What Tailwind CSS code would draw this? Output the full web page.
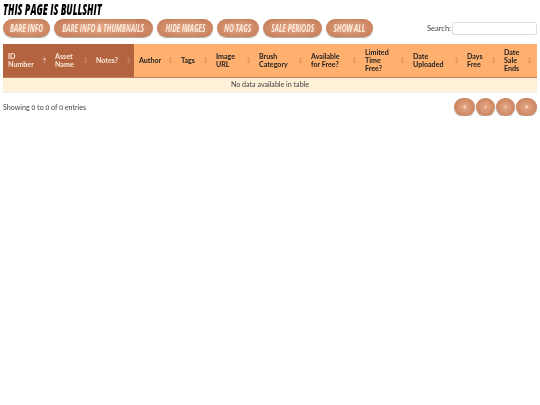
<!doctype html>
<html><head><meta charset="utf-8"><script src="https://cdn.jsdelivr.net/npm/@tailwindcss/browser@4"></script></head>
<body class="bg-white font-['Lato',sans-serif] text-[7.1px] text-[#444] antialiased">
<div class="px-[3px] w-[540px] will-change-transform">
<h1 class="font-['Open_Sans',sans-serif] italic font-extrabold text-[15px] leading-[18px] text-black whitespace-nowrap"><span class="inline-block origin-left scale-x-[.6]">THIS PAGE IS BULLSHIT</span></h1>
<div class="flex items-start justify-between h-[25px] mt-px">
<div class="flex gap-[4px] font-['Open_Sans',sans-serif] italic font-bold text-[11px] text-[#fbeee0] whitespace-nowrap">
<a class="h-[18px] w-[47px] flex items-center justify-center rounded-full bg-[radial-gradient(ellipse_at_center,#e8a988,#bf7650)] shadow-[0_1px_1px_#aaa]"><span class="inline-block scale-x-[.6]">BARE INFO</span></a>
<a class="h-[18px] w-[99px] flex items-center justify-center rounded-full bg-[radial-gradient(ellipse_at_center,#e8a988,#bf7650)] shadow-[0_1px_1px_#aaa]"><span class="inline-block scale-x-[.6]">BARE INFO &amp; THUMBNAILS</span></a>
<a class="h-[18px] w-[56px] flex items-center justify-center rounded-full bg-[radial-gradient(ellipse_at_center,#e8a988,#bf7650)] shadow-[0_1px_1px_#aaa]"><span class="inline-block scale-x-[.6]">HIDE IMAGES</span></a>
<a class="h-[18px] w-[42px] flex items-center justify-center rounded-full bg-[radial-gradient(ellipse_at_center,#e8a988,#bf7650)] shadow-[0_1px_1px_#aaa]"><span class="inline-block scale-x-[.6]">NO TAGS</span></a>
<a class="h-[18px] w-[59px] flex items-center justify-center rounded-full bg-[radial-gradient(ellipse_at_center,#e8a988,#bf7650)] shadow-[0_1px_1px_#aaa]"><span class="inline-block scale-x-[.6]">SALE PERIODS</span></a>
<a class="h-[18px] w-[47px] flex items-center justify-center rounded-full bg-[radial-gradient(ellipse_at_center,#e8a988,#bf7650)] shadow-[0_1px_1px_#aaa]"><span class="inline-block scale-x-[.6]">SHOW ALL</span></a>
</div>
<div class="flex items-center gap-px mt-[3px] text-[7.5px]"><span>Search:</span><span class="w-[85px] h-[13px] border border-[#ddd] rounded-[2px] bg-white"></span></div>
</div>
<div class="flex h-[34px] border-b border-[#c98058] font-bold leading-[8px]">
<div class="flex bg-[#b4633f] text-[#fbe9d8]">
<div class="w-[47px] pl-[5px] pr-[4px] flex items-center justify-between"><span>ID<br>Number</span><svg class="w-[3px] h-[7px] text-white/60" viewBox="0 0 3 7" fill="currentColor"><path d="M1.5 0L3 3H0z"/><path d="M1.5 7L3 4H0z" opacity=".4"/></svg></div>
<div class="w-[41px] pl-[5px] pr-[4px] flex items-center justify-between"><span>Asset<br>Name</span><svg class="w-[3px] h-[7px] text-white/20" viewBox="0 0 3 7" fill="currentColor"><path d="M1.5 0L3 3H0zM1.5 7L3 4H0z"/></svg></div>
<div class="w-[43px] pl-[5px] pr-[4px] flex items-center justify-between"><span>Notes?</span><svg class="w-[3px] h-[7px] text-white/20" viewBox="0 0 3 7" fill="currentColor"><path d="M1.5 0L3 3H0zM1.5 7L3 4H0z"/></svg></div>
</div>
<div class="flex-1 flex bg-[#ffb06f] text-[#222]">
<div class="w-[42px] pl-[5px] pr-[4px] flex items-center justify-between"><span>Author</span><svg class="w-[3px] h-[7px] text-black/15" viewBox="0 0 3 7" fill="currentColor"><path d="M1.5 0L3 3H0zM1.5 7L3 4H0z"/></svg></div>
<div class="w-[35px] pl-[5px] pr-[4px] flex items-center justify-between"><span>Tags</span><svg class="w-[3px] h-[7px] text-black/15" viewBox="0 0 3 7" fill="currentColor"><path d="M1.5 0L3 3H0zM1.5 7L3 4H0z"/></svg></div>
<div class="w-[43px] pl-[5px] pr-[4px] flex items-center justify-between"><span>Image<br>URL</span><svg class="w-[3px] h-[7px] text-black/15" viewBox="0 0 3 7" fill="currentColor"><path d="M1.5 0L3 3H0zM1.5 7L3 4H0z"/></svg></div>
<div class="w-[52px] pl-[5px] pr-[4px] flex items-center justify-between"><span>Brush<br>Category</span><svg class="w-[3px] h-[7px] text-black/15" viewBox="0 0 3 7" fill="currentColor"><path d="M1.5 0L3 3H0zM1.5 7L3 4H0z"/></svg></div>
<div class="w-[54px] pl-[5px] pr-[4px] flex items-center justify-between"><span>Available<br>for Free?</span><svg class="w-[3px] h-[7px] text-black/15" viewBox="0 0 3 7" fill="currentColor"><path d="M1.5 0L3 3H0zM1.5 7L3 4H0z"/></svg></div>
<div class="w-[48px] pl-[5px] pr-[4px] flex items-center justify-between"><span>Limited<br>Time<br>Free?</span><svg class="w-[3px] h-[7px] text-black/15" viewBox="0 0 3 7" fill="currentColor"><path d="M1.5 0L3 3H0zM1.5 7L3 4H0z"/></svg></div>
<div class="w-[54px] pl-[5px] pr-[4px] flex items-center justify-between"><span>Date<br>Uploaded</span><svg class="w-[3px] h-[7px] text-black/15" viewBox="0 0 3 7" fill="currentColor"><path d="M1.5 0L3 3H0zM1.5 7L3 4H0z"/></svg></div>
<div class="w-[37px] pl-[5px] pr-[4px] flex items-center justify-between"><span>Days<br>Free</span><svg class="w-[3px] h-[7px] text-black/15" viewBox="0 0 3 7" fill="currentColor"><path d="M1.5 0L3 3H0zM1.5 7L3 4H0z"/></svg></div>
<div class="w-[38px] pl-[5px] pr-[6px] flex items-center justify-between"><span>Date<br>Sale<br>Ends</span><svg class="w-[3px] h-[7px] text-black/15" viewBox="0 0 3 7" fill="currentColor"><path d="M1.5 0L3 3H0zM1.5 7L3 4H0z"/></svg></div>
</div>
</div>
<div class="h-[15px] pt-px bg-[#fff0d8] flex items-center justify-center border-b border-[#eee]">No data available in table</div>
<div class="flex justify-between items-center mt-[5px]"><span class="oldstyle-nums pt-[2px]">Showing 0 to 0 of 0 entries</span>
<div class="flex gap-px text-[#f9ead9] font-bold">
<a class="h-[18px] w-[21px] rounded-full flex items-center justify-center bg-[radial-gradient(ellipse_at_center,#e8a988,#bf7650)] shadow-[0_1px_1px_#aaa]">«</a>
<a class="h-[18px] w-[19px] rounded-full flex items-center justify-center bg-[radial-gradient(ellipse_at_center,#e8a988,#bf7650)] shadow-[0_1px_1px_#aaa]">‹</a>
<a class="h-[18px] w-[19px] rounded-full flex items-center justify-center bg-[radial-gradient(ellipse_at_center,#e8a988,#bf7650)] shadow-[0_1px_1px_#aaa]">›</a>
<a class="h-[18px] w-[21px] rounded-full flex items-center justify-center bg-[radial-gradient(ellipse_at_center,#e8a988,#bf7650)] shadow-[0_1px_1px_#aaa]">»</a>
</div></div>
</div>
</body></html>
